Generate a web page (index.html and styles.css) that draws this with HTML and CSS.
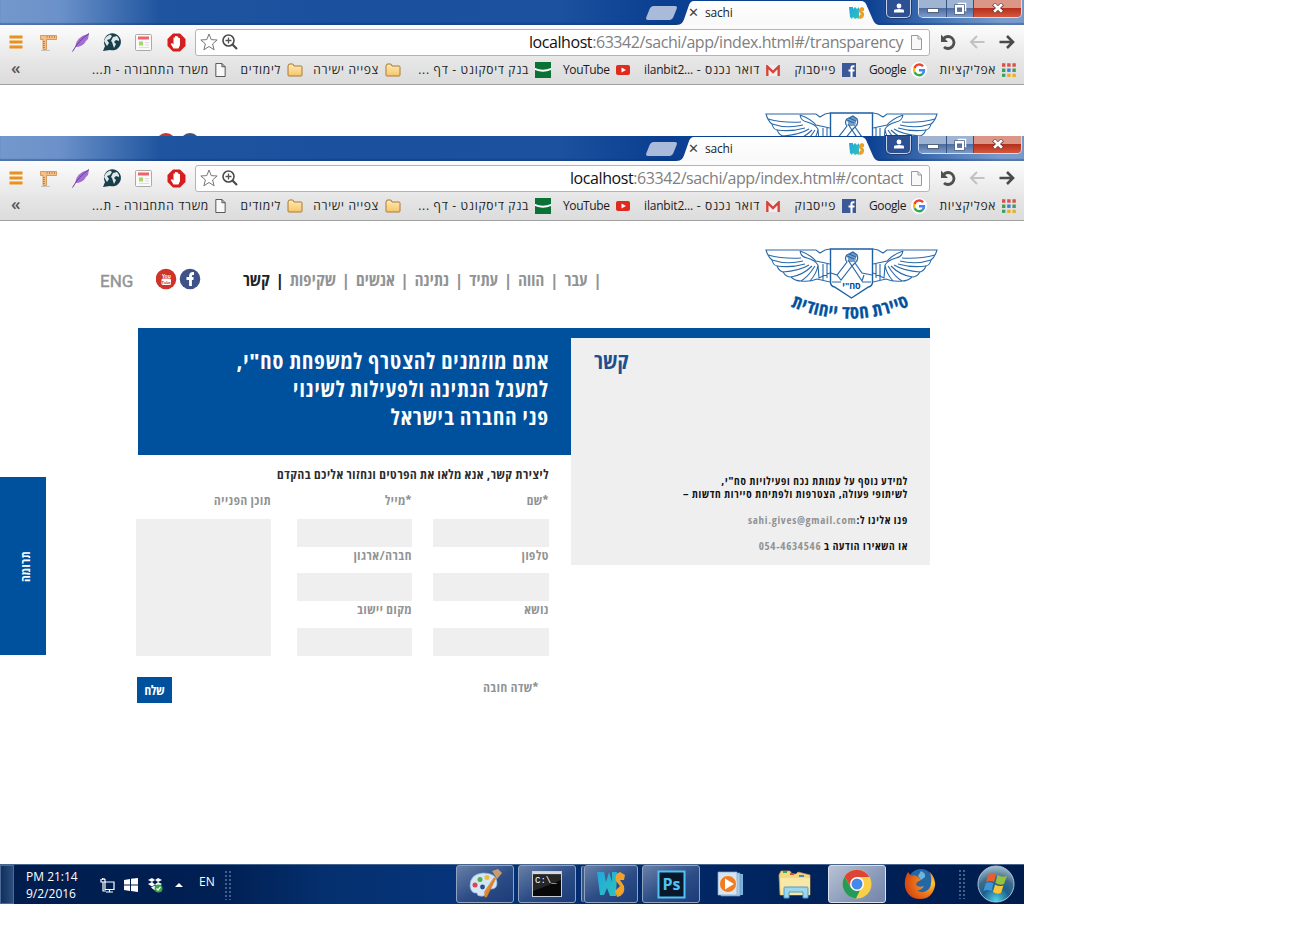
FILE: index.html
```html
<!DOCTYPE html>
<html lang="he">
<head>
<meta charset="utf-8">
<title>sachi</title>
<link rel="stylesheet" href="styles.css">
</head>
<body>
<svg class="defs" width="0" height="0">
  <defs>
    <linearGradient id="gTab" x1="0" y1="0" x2="0" y2="1"><stop offset="0" stop-color="#fff"/><stop offset="1" stop-color="#f8f8f8"/></linearGradient>
    <linearGradient id="gFold" x1="0" y1="0" x2="0" y2="1"><stop offset="0" stop-color="#ffeab5"/><stop offset="1" stop-color="#f7c56a"/></linearGradient>
    <linearGradient id="gWs" x1="0" y1="0" x2="1" y2="1"><stop offset="0" stop-color="#22a6dd"/><stop offset="1" stop-color="#2cc3bd"/></linearGradient>
    <radialGradient id="gOrb" cx=".5" cy=".95" r=".95"><stop offset="0" stop-color="#4fd0e8"/><stop offset=".4" stop-color="#1c5f8c"/><stop offset=".65" stop-color="#3c6a8c"/><stop offset="1" stop-color="#a9bfce"/></radialGradient>
    <radialGradient id="gFox" cx=".85" cy=".4" r=".9"><stop offset="0" stop-color="#ffd23c"/><stop offset=".45" stop-color="#f07a1c"/><stop offset="1" stop-color="#d0400f"/></radialGradient>
  </defs>
  <symbol id="tab" viewBox="0 0 204 25"><path d="M0 25C6 25 7 22 8.500 18L13 5Q14.500 1 18 1H185Q189 1 190.500 5L197 20Q199 25 204 25Z" fill="url(#gTab)"/></symbol>
  <symbol id="ws" viewBox="0 0 16 14"><path d="M0 1H4V3L6 1L8 3L10 1V13L8 12L6 13L4 11L3 13L1 11Z" fill="url(#gWs)"/><path d="M15 2L13 1Q9 2 10 6L12 8L9 11L11 13Q16 12 15 7L13 5H15Z" fill="#e9a12c"/></symbol>
  <symbol id="folder" viewBox="0 0 16 14"><path d="M1 12V3L2 1H6L7 3H14Q15 3 15 4V12Q15 13 14 13H2Q1 13 1 12Z" fill="url(#gFold)" stroke="#a97a35"/></symbol>
  <symbol id="file" viewBox="0 0 11 15"><path d="M.5.500H7L10.500 4V14.500H.500ZM7 .500V4H10.500" fill="#f8f8f8" stroke="currentColor"/></symbol>
  <symbol id="menu" viewBox="0 0 14 14"><path d="M.500 2H13.500M.500 7H13.500M.500 12H13.500" stroke="#e8911f" stroke-width="2.800"/></symbol>
  <symbol id="ruler" viewBox="0 0 17 17"><path d="M.500 1.500H16.500V5.500H6.500V15.500H3V5.500H.500Z" fill="#f3c088" stroke="#cf8a45" stroke-width=".8"/><path d="M3 7.500H5M3 9.500H5M3 11.500H5M3 13.500H5M7 2V4M9.500 2V4M12 2V4M14.500 2V4" stroke="#b06e2c" stroke-width=".7"/><path d="M1 16.500H10" stroke="#c4c4c4"/></symbol>
  <symbol id="feather" viewBox="0 0 18 19"><path d="M17 .500Q4 4 3 14Q11 14 14 8L16 6Z" fill="#a26ed2"/><path d="M17 .500Q7 7 .500 18.500" fill="none" stroke="#6c3a9c"/></symbol>
  <symbol id="globe" viewBox="0 0 19 19"><path d="M1 18L3 13A8.500 8.500 0 1 1 8 17Z" fill="#173f4c"/><path d="M4 4L8 1.500L10 3L8 6L5 7L7 10L5 13L2 8ZM11 4L15 3L17 6V8L14 7L12 9L14 11L12 15L10 9L9 8Z" fill="#dfe9ea"/></symbol>
  <symbol id="news" viewBox="0 0 17 17"><rect x=".5" y=".5" width="16" height="16" rx="1" fill="#f9f9f7" stroke="#aaa"/><path d="M3 4H14" stroke="#f0636a" stroke-width="3"/><path d="M4 9.500H8" stroke="#a5d66c" stroke-width="4"/><path d="M10 8.500H14M10 11H14M4 13.500H14" stroke="#ddd"/></symbol>
  <symbol id="stop" viewBox="0 0 19 19"><path d="M6 .500H13L18.500 6V13L13 18.500H6L.500 13V6Z" fill="#d51f1f"/><path d="M6.500 15.500L3.800 11L5 10L6.500 11.500V4.500H8V9V3H9.700V9V3.500H11.300V9.500V5H13V12L11.500 15.500Z" fill="#fff"/></symbol>
  <symbol id="star" viewBox="0 0 18 18"><path d="M9 1L11.200 6.600L17.200 7L12.600 10.900L14.100 16.800L9 13.500L3.900 16.800L5.400 10.900L.8 7L6.800 6.600Z" fill="#fff" stroke="#777"/></symbol>
  <symbol id="zoomin" viewBox="0 0 16 16"><circle cx="6.500" cy="6.500" r="5.500" fill="none" stroke="#4a4a4a" stroke-width="1.600"/><path d="M3.500 6.500H9.500M6.500 3.500V9.500" stroke="#555" stroke-width="1.300"/><path d="M10.500 10.500L15 15" stroke="#4a4a4a" stroke-width="2.200"/></symbol>
  <symbol id="reload" viewBox="0 0 17 16"><path d="M3.500 4.500A6 6 0 1 1 4 13" fill="none" stroke="#4f4f4f" stroke-width="2.800"/><path d="M1 .500V8H8Z" fill="#4f4f4f"/></symbol>
  <symbol id="larr" viewBox="0 0 16 14"><path d="M15.500 7H2M8 1L2 7L8 13" fill="none" stroke="currentColor" stroke-width="2"/></symbol>
  <symbol id="rarr" viewBox="0 0 16 14"><path d="M.500 7H14M8 1L14 7L8 13" fill="none" stroke="currentColor" stroke-width="2.600"/></symbol>
  <symbol id="bank" viewBox="0 0 16 16"><rect width="16" height="16" fill="#0a7235"/><path d="M0 6Q8 9.500 16 6V8Q8 11.500 0 8Z" fill="#fff"/></symbol>
  <symbol id="yt" viewBox="0 0 14 10"><rect width="14" height="10" rx="2" fill="#e02a20"/><path d="M5.500 2.500L10 5L5.500 7.500Z" fill="#fff"/></symbol>
  <symbol id="gmail" viewBox="0 0 14 11"><rect width="14" height="11" fill="#eee"/><path d="M1.300 11V1.500L7 7L12.700 1.500V11" fill="none" stroke="#d6453b" stroke-width="2.400"/></symbol>
  <symbol id="fb" viewBox="0 0 14 14"><rect width="14" height="14" fill="#3b5998"/><path d="M12.500 3.200H11Q9.500 3.200 9.500 5V14M6.500 7.500H12.500" fill="none" stroke="#fff" stroke-width="2.100"/></symbol>
  <symbol id="goog" viewBox="0 0 16 16"><circle cx="8" cy="8" r="8" fill="#fff"/><g fill="none" stroke-width="2.400"><path d="M12 4.300A5 5 0 0 0 3.500 6" stroke="#ea4335"/><path d="M3.500 6A5 5 0 0 0 3.600 10.300" stroke="#fbbc05"/><path d="M3.600 10.300A5 5 0 0 0 11.500 12" stroke="#34a853"/><path d="M11.500 12A5 5 0 0 0 13 8.200H8" stroke="#4285f4"/></g></symbol>
  <symbol id="apps" viewBox="0 0 14 14"><path d="M0 2H14" stroke="#d9534a" stroke-width="3.400" stroke-dasharray="3.400 1.800"/><path d="M0 7.200H3.400M10.400 7.200H13.800" stroke="#3f9f5c" stroke-width="3.400"/><path d="M5.200 7.200H8.600" stroke="#3b7ddd" stroke-width="3.400"/><path d="M0 12.300H3.400" stroke="#3f9f5c" stroke-width="3.200"/><path d="M5.200 12.300H14" stroke="#e6b02e" stroke-width="3.200" stroke-dasharray="3.400 1.800"/></symbol>
  <symbol id="user" viewBox="0 0 12 12"><path d="M1 10.500V8.500Q1 7 6 7T11 8.500V10.500Z" fill="#fff"/><circle cx="6" cy="4" r="2.400" fill="#fff"/></symbol>
  <symbol id="restore" viewBox="0 0 13 13"><path d="M4.500 3V1.500H11.500V8.500H10" fill="none" stroke="#fff" stroke-width="1.500"/><rect x="2" y="4" width="7" height="7" fill="none" stroke="#fff" stroke-width="2"/><path d="M.500 2.500H10.500V12.500H.500Z" fill="none" stroke="#53637c" stroke-width=".7"/></symbol>
  <symbol id="exit" viewBox="0 0 12 10"><path d="M1.500 1L10.500 9M10.500 1L1.500 9" stroke="#5d2b2b" stroke-width="4"/><path d="M2 1.300L10 8.700M10 1.300L2 8.700" stroke="#fff" stroke-width="2.800"/></symbol>
  <symbol id="wing" viewBox="0 0 65 36"><g fill="none" stroke="#2a69aa" stroke-width="1.100"><path d="M65 1L60 2L55 5L51 2L1 2Q3 9 7 12Q8 17 12 18Q14 23 18 24Q21 29 26 29Q30 33 36 33Q45 34 52 31L65 34"/><path d="M3 7Q18 11 36 10M7 12Q22 17 38 13M12 18Q26 20 40 16M18 24Q34 23 44 17M26 29Q38 27 47 18M36 33Q43 29 50 18M45 33Q52 25 53 17M35 3Q36 9 42 10Q50 12 53 17M35 3Q46 7 51 13L65 16M58 16V32M53 17L54 30L65 25M62 16V30"/></g></symbol>
  <symbol id="logo" viewBox="0 0 174 74">
    <use href="#wing" x="0" y="0" width="65" height="36"/><use href="#wing" width="65" height="36" transform="translate(173 0) scale(-1 1)"/>
    <path d="M65.500 1H107.500V34Q107.500 38 103.500 39L86.500 50L69.500 39Q65.500 38 65.500 34Z" fill="#fff" stroke="#1d5fa5" stroke-width="1.400"/>
    <path d="M66 25L72 27L82 14Q79 10 82 7L88 4L92 7Q94 12 90 15L97 25L107 27M72 27L76 32L87 18L97 33L99 27M83 12L87 18L90 15M82 8L89 11M84 6L91 9M67 34H76M97 34H106" fill="none" stroke="#2a69aa" stroke-width="1.200"/>
    <path d="M82 8L87 4L92 7L90 14H84Z" fill="#2a69aa" opacity=".65"/>
  </symbol>
</svg>

<main class="desktop">
  <section class="browser back">
    <div class="titlebar">
      <span class="newtab"></span>
      <div class="tab"><svg class="tabbg"><use href="#tab"/></svg><span class="close">✕</span><span class="tabname">sachi</span><svg width="16" height="14"><use href="#ws"/></svg></div>
      <div class="userbtn"><svg width="12" height="12"><use href="#user"/></svg></div>
      <div class="controls"><span class="min"><i></i></span><span class="max"><svg width="13" height="13"><use href="#restore"/></svg></span><span class="exit"><svg width="12" height="10"><use href="#exit"/></svg></span></div>
    </div>
    <div class="toolbar">
      <svg width="14" height="14"><use href="#menu"/></svg><svg width="17" height="17"><use href="#ruler"/></svg><svg width="18" height="19"><use href="#feather"/></svg><svg width="19" height="19"><use href="#globe"/></svg><svg width="17" height="17"><use href="#news"/></svg><svg width="19" height="19"><use href="#stop"/></svg>
      <div class="address"><svg width="18" height="18"><use href="#star"/></svg><svg width="16" height="16"><use href="#zoomin"/></svg><span class="url"><b>localhost</b>:63342/sachi/app/index.html#/transparency</span><svg class="grey" width="11" height="15"><use href="#file"/></svg></div>
      <svg width="17" height="16"><use href="#reload"/></svg><svg class="faint" width="16" height="14"><use href="#larr"/></svg><svg class="dark" width="16" height="14"><use href="#rarr"/></svg>
    </div>
    <div class="bookmarks">
      <span class="more">«</span><span dir="rtl">משרד התחבורה - ת...</span><svg class="dark" width="11" height="14"><use href="#file"/></svg><span dir="rtl">לימודים</span><svg width="16" height="14"><use href="#folder"/></svg><span dir="rtl">צפייה ישירה</span><svg width="16" height="14"><use href="#folder"/></svg><span dir="rtl">בנק דיסקונט - דף ...</span><svg width="16" height="16"><use href="#bank"/></svg><span>YouTube</span><svg width="14" height="10"><use href="#yt"/></svg><span dir="rtl">דואר נכנס - <bdi dir="ltr">ilanbit2...</bdi></span><svg width="14" height="11"><use href="#gmail"/></svg><span dir="rtl">פייסבוק</span><svg width="14" height="14"><use href="#fb"/></svg><span>Google</span><svg width="16" height="16"><use href="#goog"/></svg><span dir="rtl">אפליקציות</span><svg width="14" height="14"><use href="#apps"/></svg>
    </div>
    <div class="peek">
      <span class="dot red"></span><span class="dot navy"></span><svg width="174" height="74"><use href="#logo"/></svg>
    </div>
  </section>

  <section class="browser">
    <div class="titlebar">
      <span class="newtab"></span>
      <div class="tab"><svg class="tabbg"><use href="#tab"/></svg><span class="close">✕</span><span class="tabname">sachi</span><svg width="16" height="14"><use href="#ws"/></svg></div>
      <div class="userbtn"><svg width="12" height="12"><use href="#user"/></svg></div>
      <div class="controls"><span class="min"><i></i></span><span class="max"><svg width="13" height="13"><use href="#restore"/></svg></span><span class="exit"><svg width="12" height="10"><use href="#exit"/></svg></span></div>
    </div>
    <div class="toolbar">
      <svg width="14" height="14"><use href="#menu"/></svg><svg width="17" height="17"><use href="#ruler"/></svg><svg width="18" height="19"><use href="#feather"/></svg><svg width="19" height="19"><use href="#globe"/></svg><svg width="17" height="17"><use href="#news"/></svg><svg width="19" height="19"><use href="#stop"/></svg>
      <div class="address"><svg width="18" height="18"><use href="#star"/></svg><svg width="16" height="16"><use href="#zoomin"/></svg><span class="url"><b>localhost</b>:63342/sachi/app/index.html#/contact</span><svg class="grey" width="11" height="15"><use href="#file"/></svg></div>
      <svg width="17" height="16"><use href="#reload"/></svg><svg class="faint" width="16" height="14"><use href="#larr"/></svg><svg class="dark" width="16" height="14"><use href="#rarr"/></svg>
    </div>
    <div class="bookmarks">
      <span class="more">«</span><span dir="rtl">משרד התחבורה - ת...</span><svg class="dark" width="11" height="14"><use href="#file"/></svg><span dir="rtl">לימודים</span><svg width="16" height="14"><use href="#folder"/></svg><span dir="rtl">צפייה ישירה</span><svg width="16" height="14"><use href="#folder"/></svg><span dir="rtl">בנק דיסקונט - דף ...</span><svg width="16" height="16"><use href="#bank"/></svg><span>YouTube</span><svg width="14" height="10"><use href="#yt"/></svg><span dir="rtl">דואר נכנס - <bdi dir="ltr">ilanbit2...</bdi></span><svg width="14" height="11"><use href="#gmail"/></svg><span dir="rtl">פייסבוק</span><svg width="14" height="14"><use href="#fb"/></svg><span>Google</span><svg width="16" height="16"><use href="#goog"/></svg><span dir="rtl">אפליקציות</span><svg width="14" height="14"><use href="#apps"/></svg>
    </div>

    <div class="page">
      <header class="site-head">
        <a class="eng">ENG</a>
        <svg class="social" width="46" height="22" viewBox="0 0 46 22"><circle cx="10" cy="11" r="10.300" fill="#cf3429"/><circle cx="34" cy="11" r="10.300" fill="#3f5287"/><rect x="5.500" y="10.500" width="9.500" height="6.500" rx="1.500" fill="#fff"/><text x="10.200" y="9.500" class="yt1">You</text><text x="10.200" y="15.600" class="yt2">Tube</text><path d="M38 5.500H37Q34.500 5.500 34.500 8V18M30.500 10.500H37.500" fill="none" stroke="#fff" stroke-width="2.800"/></svg>
        <nav class="nav" dir="rtl">
          <i>|</i><a>עבר</a><i>|</i><a>הווה</a><i>|</i><a>עתיד</a><i>|</i><a>נתינה</a><i>|</i><a>אנשים</a><i>|</i><a>שקיפות</a><i class="on">|</i><a class="on">קשר</a>
        </nav>
        <svg class="logo" width="174" height="74" viewBox="0 0 174 74"><use href="#logo" width="174" height="74"/>
          <text x="86.500" y="40.500" class="crest">סח"י</text>
          <path id="arc" d="M20 56Q86 86 151 55" fill="none"/>
          <text class="motto"><textPath href="#arc" startOffset="50%">סיירת חסד ייחודית</textPath></text>
        </svg>
      </header>
      <div class="content">
        <div class="left">
          <h1 class="hero" dir="rtl">אתם מוזמנים להצטרף למשפחת סח"י,<br>למעגל הנתינה ולפעילות לשינוי<br>פני החברה בישראל</h1>
          <form class="form" dir="rtl">
            <p class="lead">ליצירת קשר, אנא מלאו את הפרטים ונחזור אליכם בהקדם</p>
            <div class="cols">
              <div class="col"><label>*שם</label><div class="input"></div><label>טלפון</label><div class="input"></div><label>נושא</label><div class="input"></div></div>
              <div class="col"><label>*מייל</label><div class="input"></div><label>חברה/ארגון</label><div class="input"></div><label>מקום יישוב</label><div class="input"></div></div>
              <div class="col"><label>תוכן הפנייה</label><div class="input area"></div></div>
            </div>
            <div class="foot"><span class="req">*שדה חובה</span><button class="send" type="button">שלח</button></div>
          </form>
        </div>
        <aside class="info" dir="rtl">
          <h2 class="info-title">קשר</h2>
          <p>למידע נוסף על עמותת נכח ופעילויות סח"י,</p>
          <p>לשיתופי פעולה, הצטרפות ולפתיחת סיירות חדשות –</p>
          <p class="gap">פנו אלינו ל:<a dir="ltr">sahi.gives@gmail.com</a></p>
          <p class="gap">או השאירו הודעה ב <a dir="ltr">054-4634546</a></p>
        </aside>
      </div>
      <a class="donate" dir="rtl">תרומה</a>
    </div>
  </section>

  <footer class="taskbar">
    <span class="peekbtn"></span>
    <div class="clock"><span>PM 21:14</span><span>9/2/2016</span></div>
    <div class="tray">
      <svg width="15" height="15" viewBox="0 0 15 15"><path d="M5 4H14V11.500H5ZM6 14H13M9.500 12V14M1 1V4H5V1M3 4V13H6M2.500 0V2M4 0V2" fill="none" stroke="#fff" stroke-width="1.200"/></svg>
      <svg width="14" height="14" viewBox="0 0 14 14"><path d="M0 2L6 1V6.600H0ZM7 .8L14 0V6.600H7ZM0 7.500H6V13L0 12ZM7 7.500H14V14L7 13Z" fill="#fff"/></svg>
      <svg width="15" height="15" viewBox="0 0 15 15"><path d="M4 0L7 2L4 4L0 2ZM10 0L14 2L10 4L7 2ZM4 4L7 6.500L4 8.500L0 6ZM10 4L14 6L10 8.500L7 6.500ZM3 9.500L7 7.500L11 9.500L7 12.500Z" fill="#fff"/><circle cx="10.500" cy="10.500" r="4" fill="#36a944"/><path d="M8.500 10.500L10 12L12.500 9" fill="none" stroke="#fff" stroke-width="1.300"/></svg>
      <svg width="8" height="4" viewBox="0 0 8 4"><path d="M0 4L4 0L8 4Z" fill="#fff"/></svg>
      <span class="lang">EN</span>
      <i class="grip"></i>
    </div>
    <div class="apps">
      <div class="app open"><svg width="34" height="32" viewBox="0 0 34 32"><path d="M2 18Q2 6 15 5Q29 5 29 15Q29 21 23 21Q18 20 18 24Q18 29 12 28Q9 28 9 25Q3 26 2 18Z" fill="#d4e6f5" stroke="#8bb4d8" stroke-width=".7"/><circle cx="7" cy="17" r="2.500" fill="#e0434b"/><circle cx="12" cy="11.500" r="2.500" fill="#4fae49"/><circle cx="19" cy="9.500" r="2.500" fill="#eebd37"/><circle cx="14.500" cy="19" r="2.400" fill="#244f91"/><path d="M26 9L17 30L16 24Z" fill="#e58b31"/><path d="M27 10L17.500 29" stroke="#d98232" stroke-width="2.500"/><path d="M24 3L30 1L34 5L29 11Z" fill="#c79c72"/></svg></div>
      <div class="app open"><svg width="30" height="26" viewBox="0 0 30 26"><rect x=".5" y=".5" width="29" height="25" fill="#080808" stroke="#c9ccd0"/><path d="M1 2H29" stroke="#d6d9dc" stroke-width="2.500"/><path d="M1 4H29V9Q15 15 1 20Z" fill="#333" opacity=".7"/><text x="3" y="12" class="cmd">C:\_</text></svg></div>
      <div class="app open stacked"><svg width="30" height="27" viewBox="0 0 30 27"><path d="M1 1H8L10 11L13 1L16 11L16 1H21L20 25H14L11 17L8 24H4Z" fill="url(#gWs)"/><path d="M29 4L24 1Q18 3 20 10L24 15L19 20L21 26Q30 24 28 15L24 9L28 9Z" fill="#f2a12b"/></svg></div>
      <div class="app open"><svg width="29" height="29" viewBox="0 0 29 29"><rect x="1.500" y="1.500" width="26" height="26" fill="#08172a" stroke="#4fc3f5" stroke-width="2"/><text x="14.500" y="19.500" class="ps">Ps</text></svg></div>
      <div class="app"><svg width="28" height="28" viewBox="0 0 28 28"><path d="M7 4H26V25H7Z" fill="#7eb1dc"/><path d="M4 3H23V26H4Z" fill="#a9cce9" stroke="#5d93c7" stroke-width=".7"/><path d="M1 2H20V25H1Z" fill="#d4e4f3" stroke="#7ba8d3" stroke-width=".7"/><circle cx="11" cy="14" r="8.500" fill="#ef7d25" stroke="#fff" stroke-width=".6"/><path d="M8 8.500L17 14L8 19.500Z" fill="#fff"/></svg></div>
      <div class="app"><svg width="34" height="32" viewBox="0 0 34 32"><path d="M1 7L3 3H12L14 6H18L20 4L32 7V27H2Z" fill="#f2d883" stroke="#c99f45" stroke-width=".7"/><path d="M2 10H32V27H3Z" fill="#f9e7a5"/><path d="M5 4H9" stroke="#40a546" stroke-width="2"/><path d="M12 6H16" stroke="#d84a3a" stroke-width="2"/><path d="M21 8H26" stroke="#4389c8" stroke-width="2"/><path d="M6 30V20Q6 19 7 19H29Q30 19 30 20V30H25V24H11V30Z" fill="#9fd6ee" stroke="#4d9ec9"/></svg></div>
      <div class="app active"><svg width="30" height="30" viewBox="0 0 30 30"><circle cx="15" cy="15" r="14.500" fill="#f9cf47"/><path d="M2.500 7.700A14.500 14.500 0 0 1 27.500 8H15L9 18Z" fill="#dc4437"/><path d="M2.500 7.700L9 18.500L18 21L14 29.500A14.500 14.500 0 0 1 2.500 7.700Z" fill="#249c58"/><circle cx="15" cy="15" r="7" fill="#fff"/><circle cx="15" cy="15" r="5.500" fill="#4688e8"/></svg></div>
      <div class="app"><svg width="32" height="32" viewBox="0 0 32 32"><circle cx="17" cy="14" r="13" fill="#2567a4"/><path d="M17 3Q22 5 21 9L17 12L14 8Z" fill="#6fb4da"/><path d="M26 4Q32 11 31 18Q28 31 16 31Q4 31 1 19Q0 10 4 4L7 8Q11 6 14 9L17 12L13 14L12 17Q15 20 20 18Q17 23 13 22Q19 27 25 21Q29 16 26 4Z" fill="url(#gFox)"/></svg></div>
      <i class="grip"></i>
      <svg class="orb" width="38" height="38" viewBox="0 0 38 38"><circle cx="19" cy="19" r="18" fill="url(#gOrb)" stroke="#a6c5d6" stroke-width="1"/><path d="M11 10Q15 7 19 9L17 17Q13 15 9 17Z" fill="#e7602c"/><path d="M20.500 10Q25 13 30 11L27 19Q23 21 18.500 18Z" fill="#97c13d"/><path d="M8.500 18.500Q12 16 16.500 18.500L14.500 26Q10 24 6.500 26Z" fill="#3d96d9"/><path d="M18 19.500Q22 22 26.500 20.500L24 28Q20 30 16 27Z" fill="#f9c534"/></svg>
    </div>
  </footer>
</main>
</body>
</html>
```

FILE: styles.css
```css
* { box-sizing: border-box; }
body { margin: 0; background: #fff; font-family: "Open Sans", "Noto Sans", "Liberation Sans", sans-serif; }
svg { display: block; flex: none; }
.defs { position: absolute; }
.desktop { width: 1024px; height: 904px; display: flex; flex-direction: column; }
.browser { height: 728px; background: #fff; flex: none; }
.browser.back { height: 136px; overflow: hidden; }

/* window frame */
.titlebar { height: 25px; display: flex; padding-left: 646px; background: linear-gradient(90deg, #7398cd 0, #6b91c9 60px, #4573b4 110px, #1f559f 160px, #1a509e 330px, #1c519f 560px, #0a3f91 660px, #0d4293 870px, #3f6fb2 930px, #779bcd 1000px); box-shadow: inset 0 -2px 1px rgba(20, 50, 110, .35); }
.newtab { width: 27px; height: 14px; margin: 6px 1px 0 2px; background: #a9bbd8; border-radius: 3px; transform: skewX(-22deg); }
.tab { position: relative; width: 204px; height: 25px; display: flex; align-items: center; padding-left: 12px; }
.tab > * { position: relative; }
.tab .tabbg { position: absolute; left: 0; top: 0; width: 204px; height: 25px; }
.close { font: 13px/20px "DejaVu Sans", sans-serif; color: #444; width: 17px; }
.tabname { width: 144px; font: 12px/20px "Open Sans", sans-serif; letter-spacing: -.2px; color: #222; }
.userbtn { margin-left: 6px; width: 25px; height: 18px; border: 1px solid #c4d3ea; border-top: 0; border-radius: 0 0 5px 5px; background: #2c5093; display: flex; justify-content: center; padding-top: 2px; box-shadow: 0 0 0 1px #243c68; }
.controls { display: flex; margin-left: 7px; width: 104px; height: 18px; border: 1px solid #d3deee; border-top: 0; border-radius: 0 0 5px 5px; overflow: hidden; }
.controls span { display: flex; justify-content: center; align-items: center; background: linear-gradient(#9fb3d3 50%, #4d6da3 50%, #7f9bc7); }
.min { width: 28px; border-right: 1px solid #35517f; }
.min i { width: 12px; height: 5px; margin-top: 4px; background: #fff; border: 1px solid #53637c; }
.max { width: 27px; border-right: 1px solid #35517f; }
.controls .exit { flex: 1; background: linear-gradient(#dc9687 45%, #b6301c 50%, #d4583c); padding-bottom: 2px; }
.toolbar { height: 35px; display: grid; grid-template-columns: 31px 32px 30px 33px 32px 28px 745px 29px 30px 16px; align-items: center; padding: 0 0 1px 9px; background: linear-gradient(#fcfcfc, #e7e7e7); }
.address { height: 27px; width: 735px; margin-top: 1px; border: 1px solid #b4b4b4; border-radius: 3px; background: #fff; display: flex; align-items: center; padding: 0 7px 1px 4px; }
.address svg + svg { margin-left: 4px; }
.url { flex: 1; text-align: right; font-size: 16px; line-height: 24px; color: #808080; padding-right: 8px; letter-spacing: -.42px; white-space: nowrap; }
.url b { font-weight: 400; color: #111; }
.grey { color: #999; } .faint { color: #c2c2c2; } .dark { color: #4a4a4a; }
.bookmarks { height: 25px; display: grid; align-items: center; padding: 0 0 5px 11px; grid-template-columns: 80px 124px 25px 47px 28px 70px 36px 114px 28px 53px 28px 122px 27px 49px 27px 42px 27px 64px 14px; background: linear-gradient(#e6e6e6, #dcdcdc); border-bottom: 1px solid #a2a2a2; }
.bookmarks span { font-size: 12px; line-height: 16px; color: #1c1c1c; white-space: nowrap; letter-spacing: -.4px; }
.bookmarks .more { font-size: 17px; font-weight: 600; color: #555; padding-bottom: 4px; }
.bookmarks span[dir] { padding-right: 6px; letter-spacing: .7px; }
.bookmarks bdi { letter-spacing: -.2px; }
.peek { display: grid; grid-template-columns: 24px 585px 174px; padding: 27px 0 0 156px; }
.dot { width: 20px; height: 20px; border-radius: 50%; margin-top: 21px; }
.red { background: #cf3429; }
.navy { background: #3f5287; }

/* site */
.page { position: relative; height: 643px; font-weight: 700; font-stretch: 75%; }
.site-head { height: 107px; display: grid; grid-template-columns: 56px 87px 358px 1fr; padding: 27px 0 0 100px; }
.eng { color: #919394; font: 400 17px/24px Roboto, sans-serif; padding-top: 21px; -webkit-text-stroke: .4px #919394; }
.social { margin-top: 20px; }
.yt1 { font: 700 5px "Liberation Sans", sans-serif; fill: #fff; text-anchor: middle; }
.yt2 { font: 700 4px "Liberation Sans", sans-serif; fill: #cf3429; text-anchor: middle; }
.nav { display: flex; justify-content: space-between; height: 24px; margin-top: 20px; font-size: 17px; line-height: 24px; color: #919394; letter-spacing: .2px; }
.nav i { font-style: normal; font-size: 16px; }
.nav .on { color: #222; }
.logo { margin-left: 164px; overflow: visible; }
.crest { font: 700 9px "Open Sans", sans-serif; fill: #00519d; text-anchor: middle; }
.motto { font: 700 18px "Open Sans", sans-serif; font-stretch: 75%; fill: #00519d; stroke: #00519d; stroke-width: .4px; text-anchor: middle; letter-spacing: .8px; }
.content { width: 792px; margin-left: 138px; border-top: 10px solid #00519d; display: grid; grid-template-columns: 433px 359px; align-items: start; }
.hero { margin: 0; height: 117px; background: #00519d; color: #fff; font-size: 22px; line-height: 28px; padding: 8px 22px 0 0; letter-spacing: 1.05px; white-space: nowrap; }
.form { padding: 9px 22px 0 0; margin-left: -2px; color: #919394; font-size: 13px; letter-spacing: .6px; }
.lead { margin: 0; color: #2b2b2b; line-height: 20px; height: 20px; white-space: nowrap; }
.cols { display: grid; grid-template-columns: 116px 115px 135px; column-gap: 21px; padding-top: 5px; }
.cols .col:nth-child(3) { margin-right: 5px; margin-left: -5px; }
.col label { display: block; line-height: 17px; height: 26px; }
.col label:nth-of-type(3) { height: 27px; }
.col .input { height: 28px; background: #efefef; }
.col label:first-child { height: 30px; line-height: 22px; }
.col .area { height: 137px; }
.foot { display: flex; justify-content: space-between; padding: 21px 10px 0 1px; }
.req { line-height: 20px; }
.send { width: 35px; height: 26px; padding: 0; border: 0; background: #00519d; color: #fff; font: inherit; }
.info { height: 227px; background: #efefef; padding: 8px 22px 0; color: #111; font-size: 11px; line-height: 13px; letter-spacing: .8px; }
.info p { margin: 0; white-space: nowrap; }
.info .gap { margin-top: 13px; }
.info a { color: #919394; letter-spacing: .7px; }
.info-title { margin: 0 279px 100px 0; width: 36px; font-size: 22px; line-height: 28px; color: #1d4f90; letter-spacing: .3px; }
.donate { position: absolute; left: 0; top: 256px; width: 46px; height: 178px; background: #00519d; color: #fff; writing-mode: vertical-rl; transform: rotate(180deg); font-size: 13px; line-height: 50px; letter-spacing: .5px; text-align: center; }

/* taskbar */
.taskbar { height: 40px; flex: none; display: flex; background: linear-gradient(90deg, #001d4d, #001f52 220px, #05306f 330px, #06347a 450px, #012764 700px, #001f55 900px, #001c4c); border-top: 1px solid #47658f; color: #fff; }
.peekbtn { width: 14px; border: 1px solid #4c6a93; background: linear-gradient(90deg, #10305f, #2c4d7d); }
.clock { width: 86px; padding: 3px 0 0 12px; display: flex; flex-direction: column; font-size: 12px; line-height: 17px; white-space: nowrap; }
.tray { width: 356px; display: grid; align-items: center; grid-template-columns: 24px 24px 27px 24px 25px 8px; align-content: start; padding-top: 5px; grid-auto-rows: 30px; }
.lang { font-size: 12px; line-height: 16px; padding-bottom: 7px; }
.grip { width: 8px; height: 30px; background: radial-gradient(circle, #48618a .7px, transparent 1px) 0 0 / 4px 4px; }
.apps { display: grid; align-items: center; grid-template-columns: 62px 66px 58px 60px 64px 62px 63px 67px 19px 38px; height: 38px; }
.app { width: 58px; height: 38px; display: flex; align-items: center; justify-content: center; border-radius: 3px; }
.open { background: linear-gradient(150deg, #6780a8, #2c4c86 55%, #1b3c78); border: 1px solid #90a2bf; }
.stacked { width: 54px; box-shadow: -3px 0 0 -1px #3b5788, -4px 0 0 -1px #90a2bf; }
.active { background: linear-gradient(140deg, #b9c3d5, #8999b9 60%, #7385aa); border: 1px solid #dae1ec; }
.cmd { font: 9px "Liberation Mono", monospace; fill: #fff; }
.ps { font: 700 16px "Open Sans", sans-serif; fill: #4fc3f5; text-anchor: middle; }
```
